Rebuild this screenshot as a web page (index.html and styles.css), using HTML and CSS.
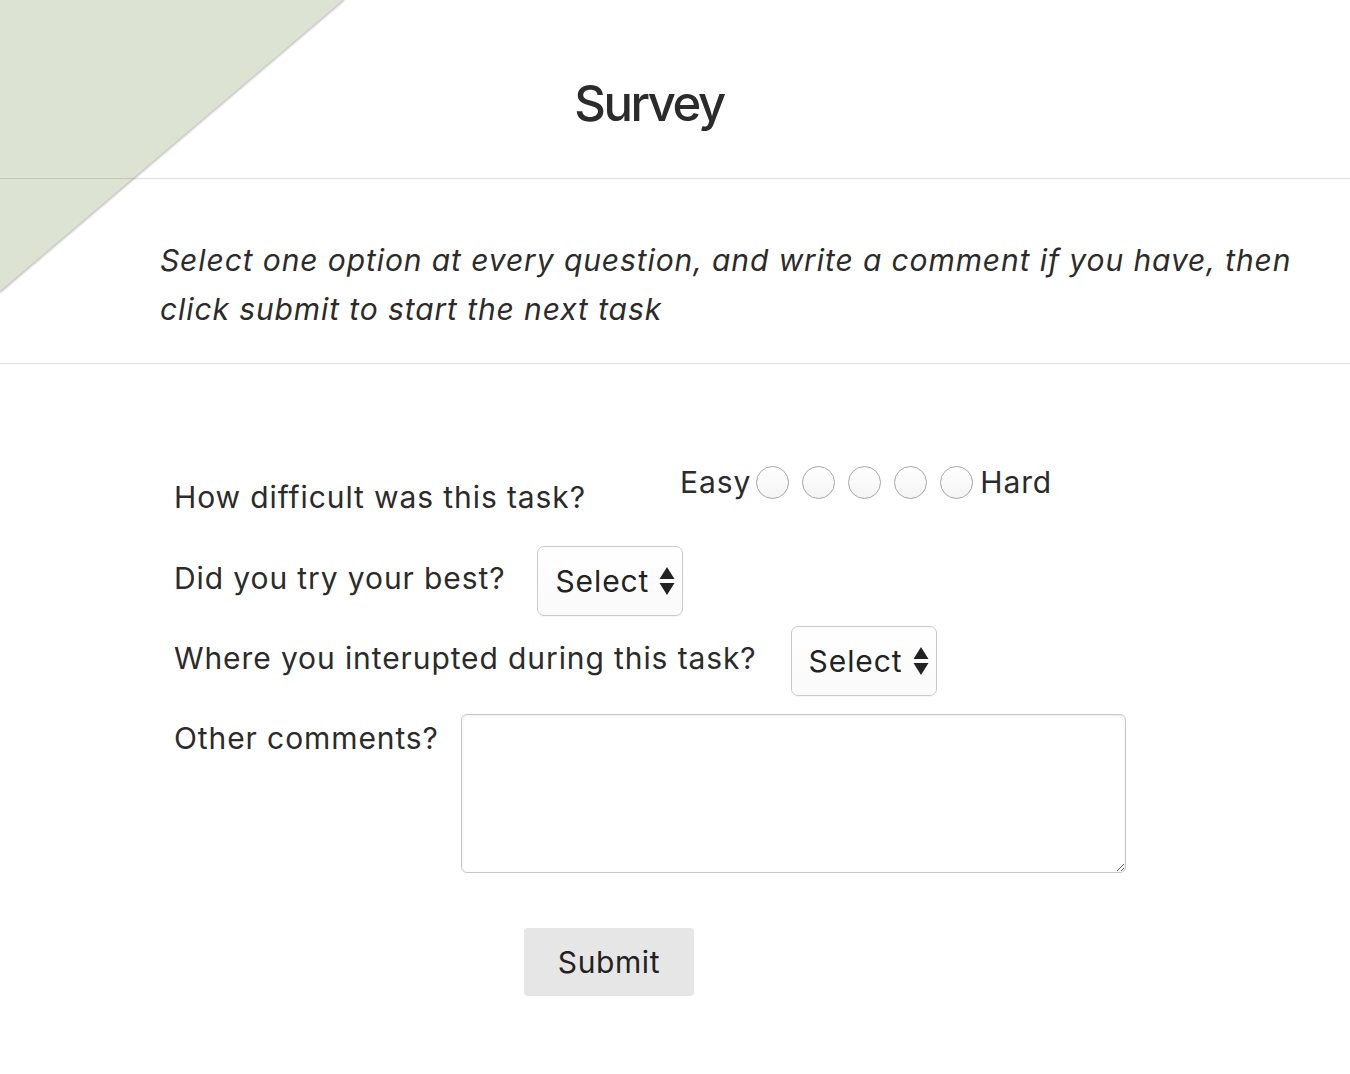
FILE: index.html
```html
<!DOCTYPE html>
<html lang="en">
<head>
<meta charset="utf-8">
<title>Survey</title>
<link rel="stylesheet" href="styles.css">
</head>
<body>
<svg class="corner" width="360" height="310" viewBox="0 0 360 310" aria-hidden="true">
  <defs>
    <filter id="blur" x="-10%" y="-10%" width="120%" height="120%">
      <feGaussianBlur stdDeviation="1.2"/>
    </filter>
  </defs>
  <line x1="344" y1="-1" x2="-1" y2="292" stroke="rgba(0,0,0,0.3)" stroke-width="2.5" filter="url(#blur)"/>
  <polygon points="0,0 343,0 0,291" fill="#dde3d2"/>
</svg>
<main class="page">
  <header class="header">
    <h1 class="title">Survey</h1>
  </header>
  <section class="intro">
    <p class="instructions">Select one option at every question, and write a comment if you have, then click submit to start the next task</p>
  </section>
  <form class="survey">
    <div class="row row-rating">
      <span class="label label-wide">How difficult was this task?</span>
      <div class="rating">
        <span class="end">Easy</span>
        <input class="radio" type="radio" name="difficulty" value="1">
        <input class="radio" type="radio" name="difficulty" value="2">
        <input class="radio" type="radio" name="difficulty" value="3">
        <input class="radio" type="radio" name="difficulty" value="4">
        <input class="radio" type="radio" name="difficulty" value="5">
        <span class="end end-hard">Hard</span>
      </div>
    </div>
    <div class="row row-select">
      <span class="label">Did you try your best?</span>
      <div class="select-wrap">
        <select class="select"><option>Select</option><option>Yes</option><option>No</option></select>
        <svg class="arrows" width="16" height="30" viewBox="0 0 16 30" aria-hidden="true"><path d="M8 1 L15.5 13 L0.5 13 Z M0.5 17 L15.5 17 L8 29 Z" fill="#222"/></svg>
      </div>
    </div>
    <div class="row row-select row-select2">
      <span class="label">Where you interupted during this task?</span>
      <div class="select-wrap">
        <select class="select"><option>Select</option><option>Yes</option><option>No</option></select>
        <svg class="arrows" width="16" height="30" viewBox="0 0 16 30" aria-hidden="true"><path d="M8 1 L15.5 13 L0.5 13 Z M0.5 17 L15.5 17 L8 29 Z" fill="#222"/></svg>
      </div>
    </div>
    <div class="row row-comment">
      <span class="label">Other comments?</span>
      <textarea class="comment"></textarea>
    </div>
    <div class="actions">
      <button class="submit" type="button">Submit</button>
    </div>
  </form>
</main>
</body>
</html>
```
FILE: styles.css
```css
html, body {
  margin: 0;
  padding: 0;
  background: #ffffff;
}
body {
  font-family: "Inter", "Liberation Sans", sans-serif;
  color: #2b2b2b;
  position: relative;
  min-height: 1074px;
}
.corner {
  position: absolute;
  left: 0;
  top: 0;
  z-index: 0;
}
.page {
  position: relative;
  z-index: 1;
}
.header {
  padding: 74px 52px 44px 0;
  text-align: center;
  border-bottom: 1px solid rgba(0, 0, 0, 0.12);
}
.title {
  margin: 0;
  font-size: 49px;
  line-height: 60px;
  font-weight: 500;
  letter-spacing: -2.4px;
}
.intro {
  padding: 57px 40px 29px 160px;
  border-bottom: 1px solid rgba(0, 0, 0, 0.12);
}
.instructions {
  margin: 0;
  font-size: 30px;
  line-height: 49px;
  font-style: italic;
  letter-spacing: 0.9px;
}
.survey {
  padding: 100px 0 0 174px;
}
.row {
  display: flex;
  font-size: 30px;
  letter-spacing: 0.9px;
}
.label {
  line-height: 36px;
  flex-shrink: 0;
}
.row-rating {
  align-items: flex-start;
  height: 82px;
}
.label-wide {
  width: 506px;
  margin-top: 15px;
}
.rating {
  display: flex;
  align-items: center;
  height: 36px;
}
.end {
  line-height: 36px;
  margin-right: 5px;
}
.end-hard {
  margin-left: 7px;
  margin-right: 0;
}
.radio {
  appearance: none;
  -webkit-appearance: none;
  width: 33px;
  height: 33px;
  margin: 0 13px 0 0;
  border-radius: 50%;
  border: 1px solid #a6a6a6;
  background: linear-gradient(#ffffff, #f4f4f4);
  box-shadow: inset 0 1px 1px rgba(255, 255, 255, 0.9);
}
.rating .radio:nth-of-type(5) {
  margin-right: 0;
}
.row-select {
  align-items: center;
  height: 70px;
  margin-bottom: 10px;
}
.row-select .label {
  margin-right: 32px;
  position: relative;
  top: -3px;
}
.row-select2 {
  margin-bottom: 18px;
}
.row-select2 .label {
  margin-right: 34px;
}
.select-wrap {
  position: relative;
  width: 146px;
  height: 70px;
}
.select {
  appearance: none;
  -webkit-appearance: none;
  width: 146px;
  height: 70px;
  box-sizing: border-box;
  margin: 0;
  padding: 0 0 0 17px;
  border: 1px solid #cccccc;
  border-radius: 7px;
  background: linear-gradient(#ffffff, #fafafa);
  box-shadow: 0 1px 1px rgba(0, 0, 0, 0.04);
  font-family: "Inter", "Liberation Sans", sans-serif;
  font-size: 30px;
  letter-spacing: 0.9px;
  color: #222222;
}
.arrows {
  position: absolute;
  right: 8px;
  top: 20px;
  pointer-events: none;
}
.row-comment {
  align-items: flex-start;
}
.row-comment .label {
  margin-top: 6px;
  margin-right: 22px;
}
.comment {
  width: 665px;
  height: 159px;
  box-sizing: border-box;
  margin: 0;
  border: 1px solid #c8c8c8;
  border-radius: 6px;
  box-shadow: inset 0 1px 3px rgba(0, 0, 0, 0.08);
  font-family: "Inter", "Liberation Sans", sans-serif;
  font-size: 20px;
  resize: both;
}
.actions {
  padding: 55px 0 0 350px;
}
.submit {
  width: 170px;
  height: 68px;
  border: none;
  border-radius: 4px;
  background: #e6e6e6;
  font-family: "Inter", "Liberation Sans", sans-serif;
  font-size: 30px;
  letter-spacing: 0.6px;
  color: #222222;
  padding: 0;
}
```
